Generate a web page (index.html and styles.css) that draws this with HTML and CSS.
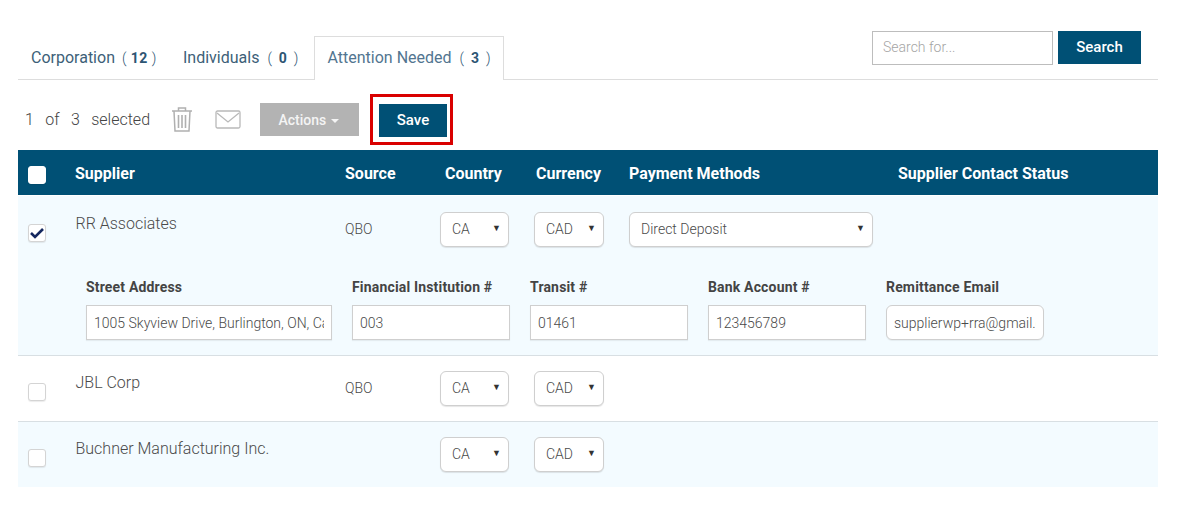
FILE: index.html
```html
<!DOCTYPE html>
<html lang="en">
<head>
<meta charset="utf-8">
<title>Suppliers</title>
<link rel="stylesheet" href="styles.css">
</head>
<body>
<main class="page">
  <div class="tabbar">
    <nav class="tabs">
      <a class="tab tab-corp">Corporation <span class="count count-tight">( <b>12</b> )</span></a>
      <a class="tab tab-ind">Individuals <span class="count">( <b>0</b> )</span></a>
      <a class="tab tab-active">Attention Needed <span class="count">( <b>3</b> )</span></a>
    </nav>
    <form class="search">
      <input class="search-input" type="text" placeholder="Search for...">
      <button class="btn search-btn" type="button">Search</button>
    </form>
  </div>

  <div class="toolbar">
    <span class="selected">1 of 3 selected</span>
    <svg class="icon-trash" width="22" height="26" viewBox="0 0 22 26" fill="none" stroke="#b0b0b0" stroke-width="1.5">
      <path d="M1 5h20M7.5 5V2h7v3M3 5l1 20h14l1-20"/>
      <path d="M7.5 9v13M11 9v13M14.5 9v13" stroke-width="1.6"/>
    </svg>
    <svg class="icon-mail" width="26" height="19" viewBox="0 0 26 19" fill="none" stroke="#b9b9b9" stroke-width="1.3">
      <rect x="1" y="1" width="24" height="17" rx="1.5"/>
      <path d="M2 3l11 9 11-9"/>
    </svg>
    <button class="btn actions" type="button">Actions <i class="caret"></i></button>
    <div class="highlight"><button class="btn save" type="button">Save</button></div>
  </div>

  <section class="table">
    <div class="row head">
      <div class="head-check"><span class="check check-head"></span></div>
      <div>Supplier</div>
      <div>Source</div>
      <div class="h-country">Country</div>
      <div class="h-currency">Currency</div>
      <div>Payment Methods</div>
      <div>Supplier Contact Status</div>
    </div>

    <div class="item tint first">
      <div class="row body">
        <div><span class="check">
          <svg width="16" height="14" viewBox="0 0 16 14" fill="none" stroke="#14285f" stroke-width="2.6"><path d="M2 7l4 4 8-8"/></svg>
        </span></div>
        <div class="name">RR Associates</div>
        <div class="source">QBO</div>
        <div><span class="select sel-country">CA<i class="arrow">▼</i></span></div>
        <div><span class="select sel-currency">CAD<i class="arrow">▼</i></span></div>
        <div><span class="select sel-payment">Direct Deposit<i class="arrow">▼</i></span></div>
      </div>
      <div class="details">
        <label class="field f-street">Street Address<input type="text" value="1005 Skyview Drive, Burlington, ON, Canada"></label>
        <label class="field f-std">Financial Institution #<input type="text" value="003"></label>
        <label class="field f-std">Transit #<input type="text" value="01461"></label>
        <label class="field f-std">Bank Account #<input type="text" value="123456789"></label>
        <label class="field f-email">Remittance Email<input type="text" value="supplierwp+rra@gmail.com"></label>
      </div>
    </div>

    <div class="item">
      <div class="row body">
        <div><span class="check"></span></div>
        <div class="name">JBL Corp</div>
        <div class="source">QBO</div>
        <div><span class="select sel-country">CA<i class="arrow">▼</i></span></div>
        <div><span class="select sel-currency">CAD<i class="arrow">▼</i></span></div>
      </div>
    </div>

    <div class="item tint">
      <div class="row body">
        <div><span class="check"></span></div>
        <div class="name">Buchner Manufacturing Inc.</div>
        <div class="source"></div>
        <div><span class="select sel-country">CA<i class="arrow">▼</i></span></div>
        <div><span class="select sel-currency">CAD<i class="arrow">▼</i></span></div>
      </div>
    </div>
  </section>
</main>
</body>
</html>
```
FILE: styles.css
```css
* { box-sizing: border-box; }
html, body { margin: 0; padding: 0; background: #fff; }
body { font-family: Roboto, "Liberation Sans", sans-serif; color: #555; }
.page { width: 1140px; margin-left: 18px; padding-top: 30px; }

.tabbar { display: flex; justify-content: space-between; height: 50px; border-bottom: 1px solid #ddd; }
.tabs { display: flex; align-items: flex-end; }
.tab { display: block; height: 44px; padding-top: 13px; font-size: 16px; font-weight: 400; color: #3d5f78; white-space: nowrap; }
.tab-corp { width: 152px; padding-left: 13px; }
.tab-ind { width: 144px; padding-left: 13px; }
.tab-active { width: 190px; height: 44px; margin-bottom: -1px; padding-top: 11px; padding-left: 12.5px; background: #fff; border: 1px solid #ddd; border-bottom: 0; color: #527590; }
.count { font-size: 14px; font-weight: 300; margin-left: 4px; word-spacing: 2.5px; color: #2d5573; letter-spacing: 0.5px; }
.count-tight { word-spacing: 0; margin-left: 3px; }
.count b { font-size: 14px; font-weight: 700; color: #2d5573; }

.search { display: flex; gap: 5px; margin-right: 17px; }
.search-input { width: 181px; height: 34px; margin-top: 1px; padding: 0 10px 2px; border: 1px solid #bdbdbd; background: #fff; font: 300 14px Roboto, sans-serif; color: #555; outline: 0; }
.search-input::placeholder { color: #a5a5a5; opacity: 1; }
.btn { border: 0; border-radius: 0; color: #fff; font: 500 14px Roboto, sans-serif; cursor: pointer; padding: 0; }
.search-btn { width: 83px; height: 33px; margin-top: 1px; padding-bottom: 2px; background: #005075; font-size: 15px; }

.toolbar { display: flex; align-items: center; height: 70px; padding-top: 8px; }
.selected { width: 146px; padding-left: 7px; font-size: 16px; font-weight: 300; color: #444; word-spacing: 7.5px; white-space: nowrap; }
.icon-trash { margin-left: 7px; }
.icon-mail { margin-left: 22px; }
.actions { width: 99px; height: 33px; margin-left: 19px; padding-top: 1px; padding-right: 2px; background: #b3b3b3; color: #f4f4f4; }
.caret { display: inline-block; margin-left: 1px; vertical-align: middle; border-top: 4px solid #f4f4f4; border-left: 4px solid transparent; border-right: 4px solid transparent; }
.highlight { margin-left: 11px; width: 83px; height: 51px; padding: 7px 6px; border: 3px solid #d90000; }
.save { display: block; width: 68px; height: 33px; background: #005075; font-size: 15px; }

.row { display: grid; grid-template-columns: 57px 270px 95px 94px 95px 269px 1fr; }
.head { height: 45px; margin-bottom: 1px; padding-top: 1px; align-items: center; background: #005075; color: #fff; font-size: 16px; font-weight: 700; }
.head-check { padding-top: 4px; }
.h-country { padding-left: 5px; }
.h-currency { padding-left: 2px; }

.item { border-bottom: 1px solid #d8dfe3; background: #fff; }
.item:last-child { border-bottom: 0; }
.tint { background: #f3fbff; }
.body { height: 65px; font-size: 16px; font-weight: 300; color: #444; }
.first .body { height: 67px; }
.body > div { padding-top: 15px; }
.first .body > div { padding-top: 16px; }
.body .name { padding-top: 17px; padding-left: 0.5px; color: #4a4a4a; }
.first .body .name { padding-top: 18px; }
.body .source { font-size: 14px; padding-top: 24px; color: #4a4a4a; }
.first .body .source { padding-top: 25px; }

.check { display: flex; align-items: center; justify-content: center; width: 18px; height: 18px; margin: 12px 0 0 10px; background: #fff; border: 1px solid #d4d4d4; border-radius: 3px; box-shadow: 0 1px 1px rgba(0,0,0,.08); }
.check-head { margin-top: 0; border-color: #fff; }

.select { position: relative; display: block; height: 35px; padding: 8px 0 0 11px; background: #fff; border: 1px solid #cfcfcf; border-radius: 6px; box-shadow: 0 1px 1px rgba(0,0,0,.1); font-size: 14px; font-weight: 300; color: #4a4a4a; }
.sel-country { width: 69px; }
.sel-currency { width: 70px; }
.sel-payment { width: 244px; }
.arrow { position: absolute; right: 7px; top: 9px; font-style: normal; font-size: 9px; line-height: 12px; font-weight: 400; color: #333; }

.details { display: flex; height: 92px; padding: 16px 0 0 68px; }
.field { display: flex; flex-direction: column; gap: 9px; font-size: 14px; font-weight: 700; letter-spacing: 0.17px; color: #444; white-space: nowrap; line-height: 17px; }
.field input { height: 35px; padding: 0 7px; background: #fff; border: 1px solid #cfcfcf; font: 300 14px Roboto, sans-serif; letter-spacing: 0; color: #4a4a4a; outline: 0; box-shadow: 0 1px 1px rgba(0,0,0,.06); }
.f-street { width: 266px; }
.f-street input { width: 246px; }
.f-std { width: 178px; }
.f-std input { width: 158px; }
.f-email { width: 158px; }
.f-email input { width: 158px; border-radius: 6px; }
```
